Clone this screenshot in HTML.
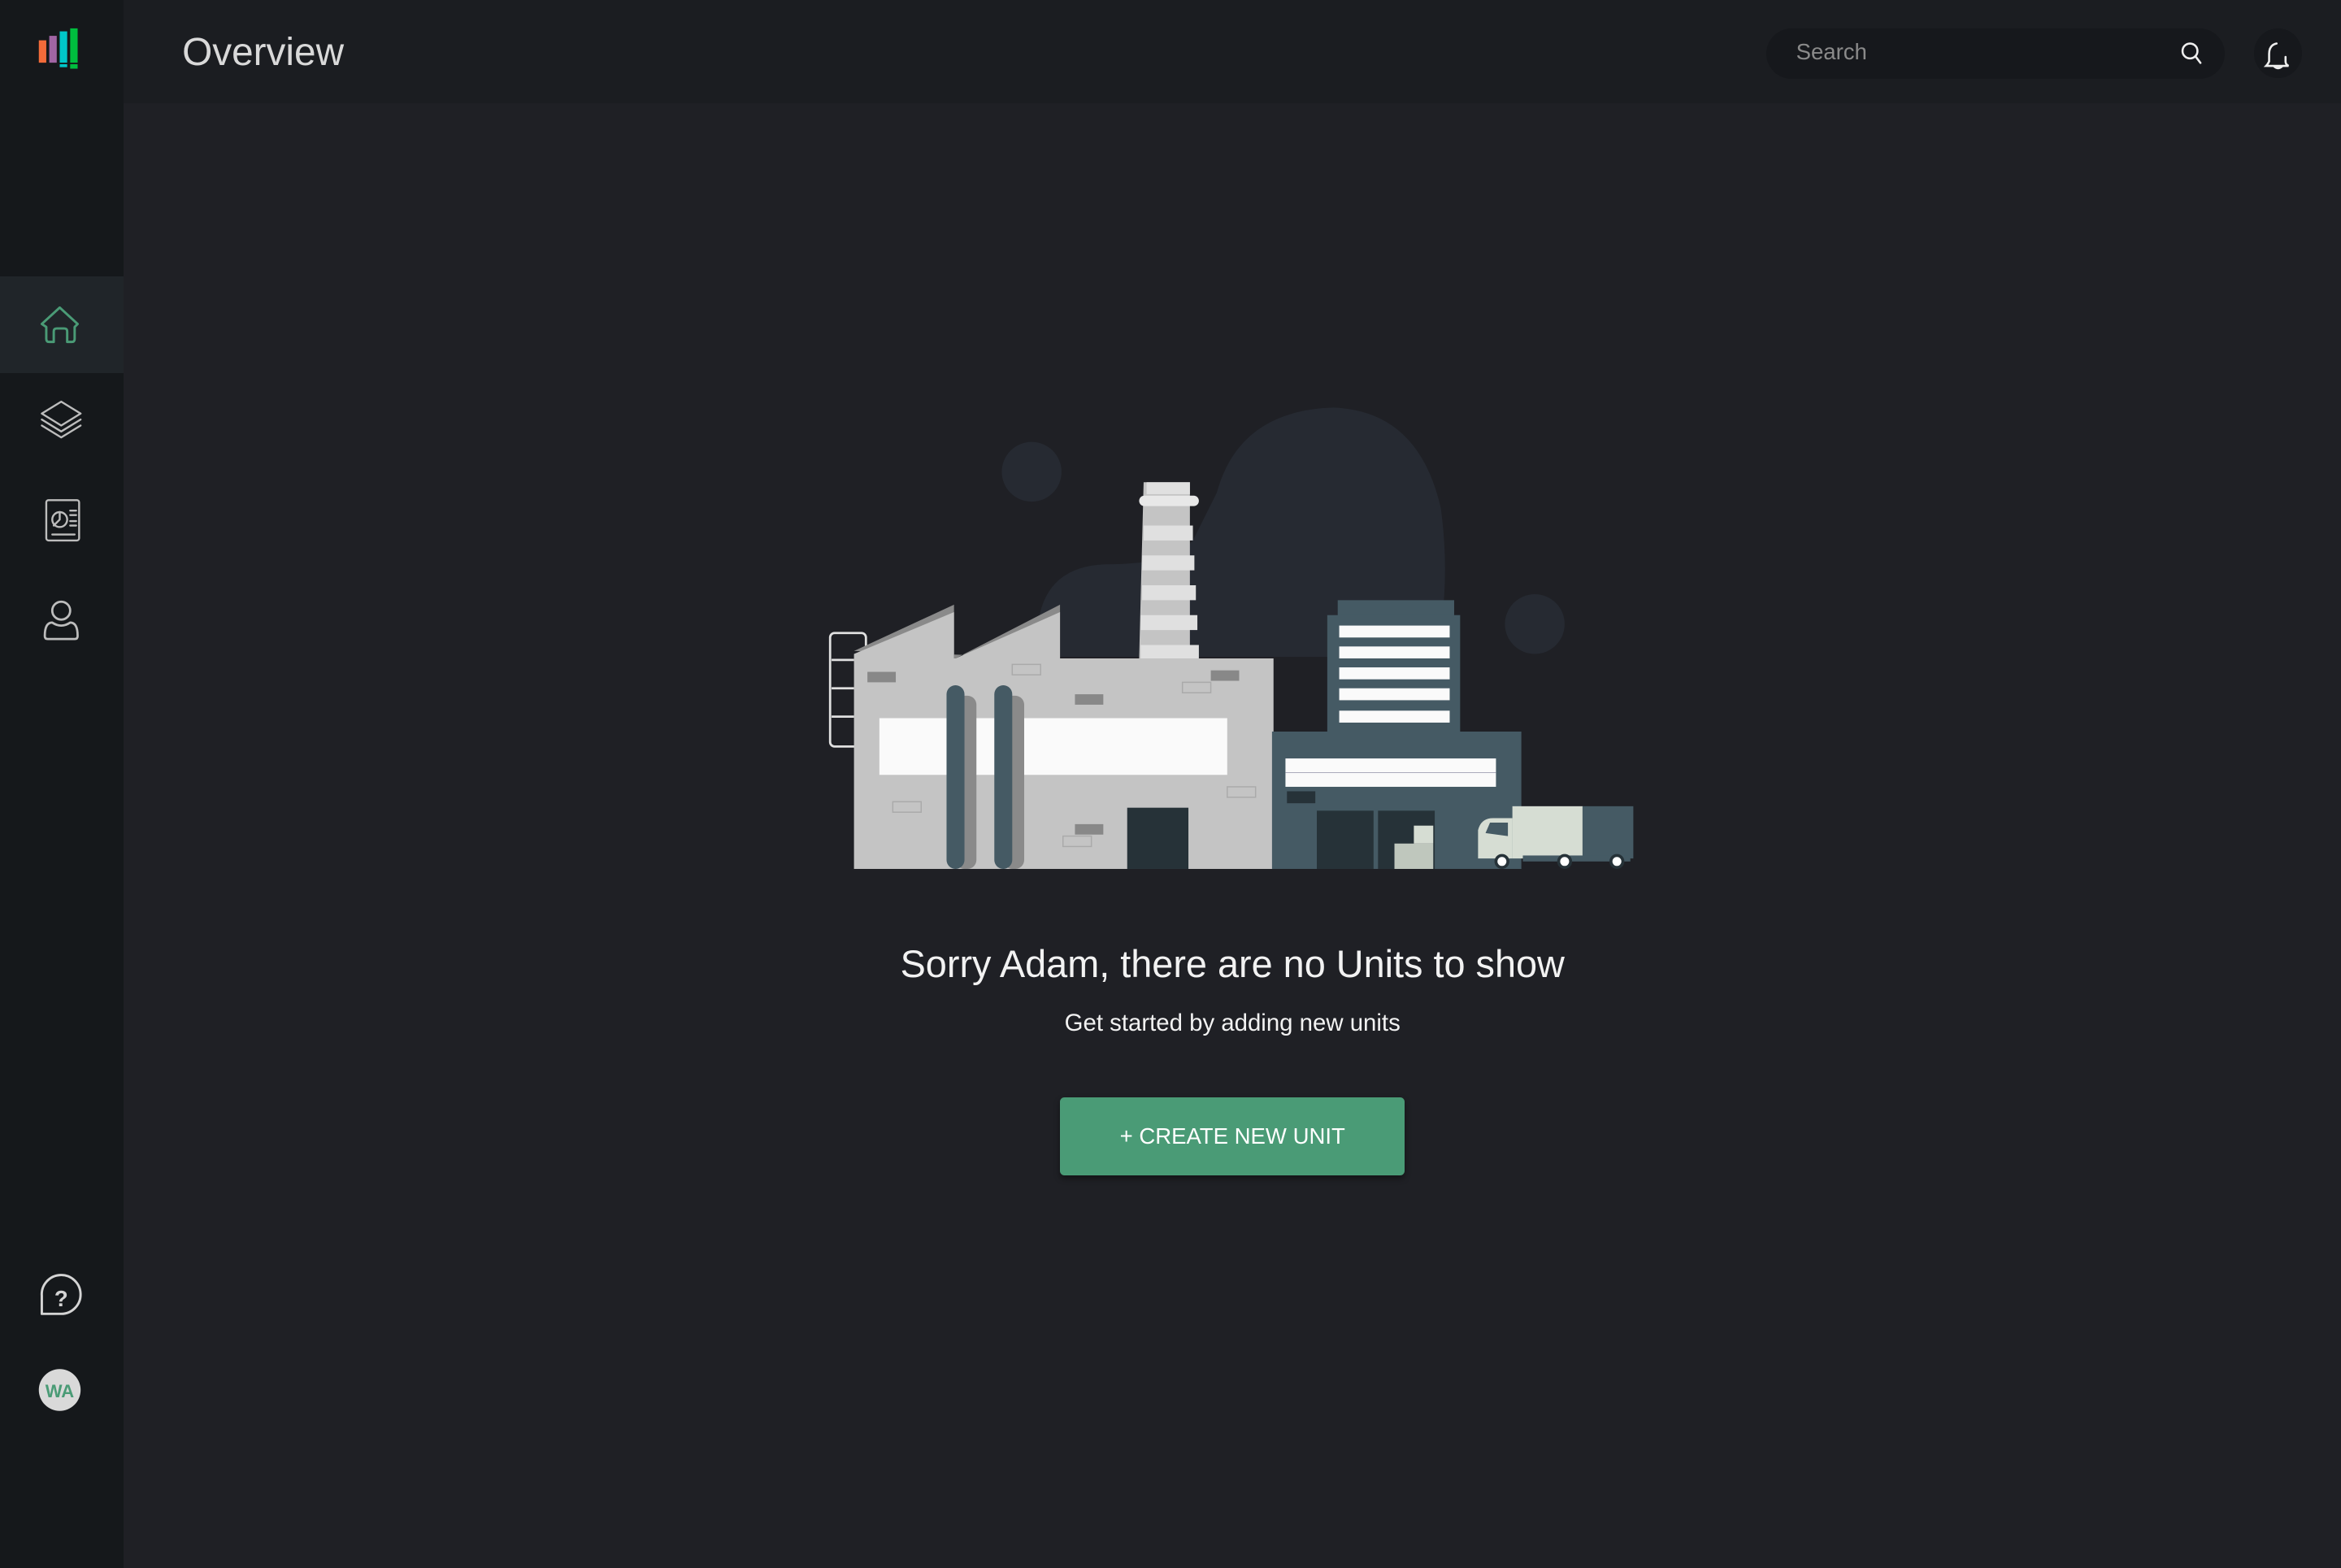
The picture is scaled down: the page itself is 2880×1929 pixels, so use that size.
<!DOCTYPE html>
<html><head><meta charset="utf-8"><style>
html,body{margin:0;padding:0;background:#1f2025;overflow:hidden}
#w{width:1568px;height:1050px;zoom:1.836735;position:relative;font-family:"Liberation Sans",sans-serif;background:#1f2025}
.sb{position:absolute;left:0;top:0;width:83px;height:1050px;background:#15181b}
.hd{position:absolute;left:83px;top:0;right:0;height:69px;background:#1b1d21}
.abs{position:absolute}
</style></head><body><div id="w">
<div class="sb"></div>
<div class="abs" style="left:0;top:185px;width:83px;height:65px;background:#202529"></div>
<div class="hd"></div>
<svg class="abs" style="left:0;top:0" width="83" height="1050" fill="none" stroke-linecap="round" stroke-linejoin="round">
<rect x="26" y="27" width="5" height="15" fill="#f26b3a"/>
<rect x="33" y="24" width="5" height="18" fill="#a165a4"/>
<rect x="40" y="21" width="5" height="21" fill="#00c6c9"/>
<rect x="40" y="43" width="5" height="2" fill="#00c6c9"/>
<rect x="47" y="19" width="5" height="23" fill="#00be3e"/>
<rect x="47" y="43" width="5" height="3" fill="#00be3e"/>
<path d="M28 217 L40 206 L52 217 L50 219 L50 227 Q50 229 48 229 L45 229 L45 222 Q45 220 43 220 L38 220 Q36 220 36 222 L36 229 L33 229 Q31 229 31 227 L31 219 Z" stroke="#4a9b76" stroke-width="1.6"/>
<g stroke="#bdbdbd" stroke-width="1.3"><path d="M28 277 L41 269 L54 277 L41 285 Z"/><path d="M28 281 L41 289 L54 281"/><path d="M28 285 L41 293 L54 285"/></g>
<g stroke="#bdbdbd" stroke-width="1.3"><rect x="31" y="335" width="22" height="27" rx="1.5"/><circle cx="40" cy="348" r="5"/><path d="M40 343 V348 L36 352"/><path d="M47 342 H51 M47 345 H51 M47 349 H51 M47 352 H51 M35 358 H50"/></g>
<g stroke="#bdbdbd" stroke-width="1.5"><circle cx="41" cy="409" r="6"/><path d="M30 426 Q30 417 35 417 Q41 421 47 417 Q52 417 52 426 Q52 428 50 428 L32 428 Q30 428 30 426 Z"/></g>
<path d="M28 880 L28 868 A13 13 0 1 1 41 880 Z" stroke="#d4d4d4" stroke-width="1.6"/>
<text x="41" y="875" fill="#d4d4d4" font-size="15" font-weight="bold" text-anchor="middle" font-family="Liberation Sans">?</text>
<circle cx="40" cy="931" r="14" fill="#d9d9d9"/>
<text x="40" y="936" fill="#4a9b76" font-size="12" font-weight="bold" text-anchor="middle" font-family="Liberation Sans">WA</text>
</svg>
<div class="abs" style="left:122px;top:20px;font-size:26px;color:#d9d9d9">Overview</div>
<div class="abs" style="left:1183px;top:19px;width:307px;height:34px;border-radius:17px;background:#16181c"></div>
<div class="abs" style="left:1203px;top:26px;font-size:15px;color:#8a8a8a">Search</div>
<div class="abs" style="left:1510px;top:19px;width:32px;height:33px;border-radius:50%;background:#16181c"></div>
<svg class="abs" style="left:1450px;top:20px" width="100" height="32" fill="none" stroke="#eee" stroke-width="1.4" stroke-linecap="round">
<circle cx="17" cy="14" r="5"/><path d="M21 18 L24 22"/>
<path d="M75 9 Q70 10 70 16 L70 21 Q69 23 68 24 L83 24 Q81 23 81 21 L81 18 M73 24 Q76 27 79 24"/>
</svg>
<svg class="abs" style="left:0;top:0" width="1568" height="1050">
<g fill="#262a32">
<circle cx="691" cy="316" r="20"/><circle cx="1028" cy="418" r="20"/>
<path d="M815 330 Q830 275 893 273 Q950 275 965 340 Q972 390 962 440 L695 440 Q690 380 740 378 Q790 378 800 360 Z"/>
</g>
<rect x="556" y="424" width="24" height="76" rx="3" fill="none" stroke="#e0e0e0" stroke-width="1.5"/>
<path d="M557 442 H572 M557 461 H572 M557 480 H572" stroke="#e0e0e0" stroke-width="1.5"/>
<path d="M572 436 L639 405 L639 441 L640 441 L710 405 L710 441 Z" fill="#8a8a8a"/>
<path d="M572 441 L572 438 L639 410 L639 441 L640 441 L710 410 L710 441 Z" fill="#c4c4c4"/>
<path d="M766 323 H797 V441 H763 Z" fill="#c4c4c4"/>
<g fill="#e0e0e0"><rect x="768" y="323" width="29" height="8"/><rect x="766" y="352" width="33" height="10"/><rect x="765" y="372" width="35" height="10"/><rect x="765" y="392" width="36" height="10"/><rect x="764" y="412" width="38" height="10"/><rect x="764" y="432" width="39" height="9"/></g>
<rect x="763" y="332" width="40" height="7" rx="3.5" fill="#e8e8e8"/>
<rect x="572" y="441" width="281" height="141" fill="#c4c4c4"/>
<rect x="589" y="481" width="233" height="38" fill="#fafafa"/>
<g fill="#888"><rect x="581" y="450" width="19" height="7"/><rect x="720" y="465" width="19" height="7"/><rect x="811" y="449" width="19" height="7"/><rect x="720" y="552" width="19" height="7"/></g>
<g fill="none" stroke="#aaa" stroke-width=".8"><rect x="598" y="537" width="19" height="7"/><rect x="678" y="445" width="19" height="7"/><rect x="792" y="457" width="19" height="7"/><rect x="822" y="527" width="19" height="7"/><rect x="712" y="560" width="19" height="7"/></g>
<g fill="#8a8a8a"><rect x="640" y="466" width="14" height="116" rx="6"/><rect x="672" y="466" width="14" height="116" rx="6"/></g>
<g fill="#455a64"><rect x="634" y="459" width="12" height="123" rx="6"/><rect x="666" y="459" width="12" height="123" rx="6"/></g>
<rect x="755" y="541" width="41" height="41" fill="#263238"/>
<rect x="896" y="402" width="78" height="11" fill="#455a64"/>
<rect x="889" y="412" width="89" height="80" fill="#455a64"/>
<g fill="#fafafa"><rect x="897" y="419" width="74" height="8"/><rect x="897" y="433" width="74" height="8"/><rect x="897" y="447" width="74" height="8"/><rect x="897" y="461" width="74" height="8"/><rect x="897" y="476" width="74" height="8"/></g>
<rect x="852" y="490" width="167" height="92" fill="#455a64"/>
<rect x="861" y="508" width="141" height="19" fill="#fafafa"/>
<path d="M861 517.5 H1002" stroke="#aab" stroke-width=".6"/>
<rect x="862" y="530" width="19" height="8" fill="#263238"/>
<rect x="882" y="543" width="38" height="39" fill="#263238"/><rect x="923" y="543" width="38" height="39" fill="#263238"/>
<rect x="934" y="565" width="26" height="17" fill="#bfc7bd"/><rect x="947" y="553" width="13" height="12" fill="#d6ddd3"/>
<rect x="1013" y="540" width="47" height="35" fill="#d6ddd3"/><rect x="1060" y="540" width="34" height="35" fill="#455a64"/>
<path d="M990 575 L990 556 Q992 548 1000 548 L1013 548 L1013 575 Z" fill="#d6ddd3"/>
<path d="M995 558 L998 551 L1010 551 L1010 560 Z" fill="#455a64"/>
<rect x="1020" y="573" width="72" height="4" fill="#455a64"/>
<g fill="#fff" stroke="#263238" stroke-width="2"><circle cx="1006" cy="577" r="4"/><circle cx="1048" cy="577" r="4"/><circle cx="1083" cy="577" r="4"/></g>
</svg>
<div class="abs" style="left:83px;right:0;top:631px;text-align:center;font-size:25.5px;color:#f2f2f2">Sorry Adam, there are no Units to show</div>
<div class="abs" style="left:83px;right:0;top:676px;text-align:center;font-size:16px;color:#f2f2f2">Get started by adding new units</div>
<div class="abs" style="left:710px;top:735px;width:231px;height:52px;border-radius:3px;background:#4a9b76;box-shadow:0 2px 4px rgba(0,0,0,.4);color:#fff;font-size:15px;line-height:52px;text-align:center">+ CREATE NEW UNIT</div>
</div></body></html>
